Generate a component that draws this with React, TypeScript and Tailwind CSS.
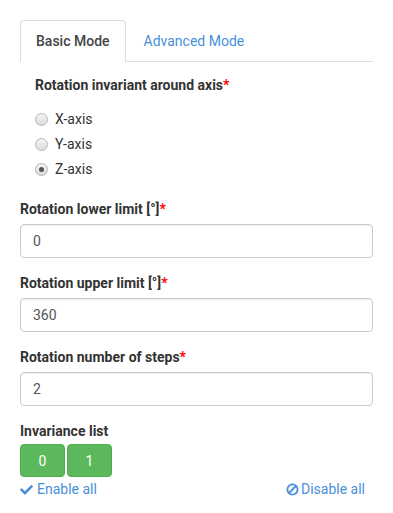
import React, { useState } from 'react';

const linkColor = 'text-[#4a90d9]';

const Req = () => <span className="text-[#f00] font-bold">*</span>;

const Radio: React.FC<{ label: string; checked: boolean; onSelect: () => void }> = ({ label, checked, onSelect }) => (
  <div className="flex items-center h-5 cursor-pointer" onClick={onSelect}>
    <span className="w-[13px] h-[13px] rounded-full border border-[#b5b5b5] bg-gradient-to-b from-[#f4f4f4] to-[#dcdcdc] flex items-center justify-center">
      {checked && <span className="w-[5px] h-[5px] rounded-full bg-[#555]" />}
    </span>
    <span className="ml-[7px]">{label}</span>
  </div>
);

const Field: React.FC<{ label: string; value: string }> = ({ label, value }) => (
  <div className="mb-[15px]">
    <label className="block font-bold mb-[5px]">
      {label}
      <Req />
    </label>
    <input
      defaultValue={value}
      className="block w-full h-[34px] px-3 py-[6px] border border-[#ccc] rounded text-[#555] shadow-[inset_0_1px_1px_rgba(0,0,0,0.075)] outline-none"
    />
  </div>
);

export default function App() {
  const [axis, setAxis] = useState('Z-axis');
  const [tab, setTab] = useState<'basic' | 'advanced'>('basic');

  return (
    <div className="px-5 pt-5 font-['Roboto','Liberation_Sans',sans-serif] text-[14px] leading-5 text-[#333] bg-white min-h-[513px]">
      {/* tabs */}
      <ul className="flex border-b border-[#ddd]">
        <li className="-mb-px mr-[2px]">
          <a
            onClick={() => setTab('basic')}
            className={`block px-[15px] py-[10px] border rounded-t cursor-pointer ${
              tab === 'basic' ? 'border-[#ddd] border-b-white bg-white text-[#444] font-medium' : `border-transparent ${linkColor}`
            }`}
          >
            Basic Mode
          </a>
        </li>
        <li className="-mb-px">
          <a
            onClick={() => setTab('advanced')}
            className={`block px-[15px] py-[10px] border rounded-t cursor-pointer ${
              tab === 'advanced' ? 'border-[#ddd] border-b-white bg-white text-[#444] font-medium' : `border-transparent ${linkColor}`
            }`}
          >
            Advanced Mode
          </a>
        </li>
      </ul>

      {/* axis choice */}
      <div className="pl-[15px] pt-[13px]">
        <label className="block font-bold">
          Rotation invariant around axis
          <Req />
        </label>
        <div className="mt-[14px] flex flex-col gap-[5px]">
          {['X-axis', 'Y-axis', 'Z-axis'].map((a) => (
            <Radio key={a} label={a} checked={axis === a} onSelect={() => setAxis(a)} />
          ))}
        </div>
      </div>

      <div className="mt-[20px]">
        <Field label="Rotation lower limit [°]" value="0" />
        <Field label="Rotation upper limit [°]" value="360" />
        <Field label="Rotation number of steps" value="2" />

        <label className="block font-bold mb-[3px]">Invariance list</label>
        <div className="flex gap-[2px]">
          {['0', '1'].map((n) => (
            <button
              key={n}
              className="w-[45px] h-[33px] rounded bg-[#5cb85c] border border-[#4cae4c] text-white"
            >
              {n}
            </button>
          ))}
        </div>
        <div className="flex justify-between items-center mt-[2px] pr-2">
          <a className={`flex items-center ${linkColor} cursor-pointer`}>
            <svg width="13" height="11" viewBox="0 0 512 420" className="mr-[4px]" fill="currentColor">
              <path d="M173.9 409.2L7.5 242.8c-10-10-10-26.2 0-36.2l36.2-36.2c10-10 26.2-10 36.2 0L192 282.5 432.1 42.4c10-10 26.2-10 36.2 0l36.2 36.2c10 10 10 26.2 0 36.2L210.1 409.2c-10 10-26.2 10-36.2 0z" />
            </svg>
            Enable all
          </a>
          <a className={`flex items-center ${linkColor} cursor-pointer`}>
            <svg width="13" height="13" viewBox="0 0 14 14" className="mr-[2px]" fill="none" stroke="currentColor" strokeWidth="2">
              <circle cx="7" cy="7" r="5.5" />
              <line x1="3.2" y1="10.8" x2="10.8" y2="3.2" />
            </svg>
            Disable all
          </a>
        </div>
      </div>
    </div>
  );
}
